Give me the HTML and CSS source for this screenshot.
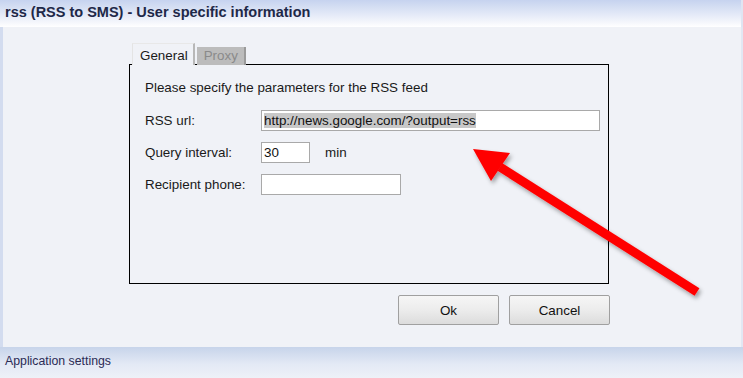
FILE: index.html
```html
<!DOCTYPE html>
<html lang="en">
<head>
    <meta charset="UTF-8">
    <title>rss (RSS to SMS) - User specific information</title>
    <link rel="stylesheet" href="styles.css">
</head>
<body>
    <div class="window">
        <div class="title-bar">rss (RSS to SMS) - User specific information</div>

        <div class="content">
            <div class="tabs">
                <span class="tab active">General</span>
                <span class="tab">Proxy</span>
            </div>

            <div class="panel">
                <p class="intro">Please specify the parameters for the RSS feed</p>

                <div class="field">
                    <label>RSS url:</label>
                    <div class="input input-wide"><span class="selected">http://news.google.com/?output=rss</span></div>
                </div>

                <div class="field">
                    <label>Query interval:</label>
                    <div class="input input-short">30</div>
                    <span class="unit">min</span>
                </div>

                <div class="field">
                    <label>Recipient phone:</label>
                    <div class="input input-mid"></div>
                </div>
            </div>

            <div class="actions">
                <button class="btn">Ok</button>
                <button class="btn">Cancel</button>
            </div>

            <!-- annotation arrow drawn over the dialog -->
            <svg class="arrow" width="743" height="378" viewBox="0 0 743 378">
                <defs>
                    <filter id="shadow" x="-20%" y="-20%" width="140%" height="140%">
                        <feDropShadow dx="2" dy="3" stdDeviation="2" flood-color="#000" flood-opacity="0.35"/>
                    </filter>
                </defs>
                <g filter="url(#shadow)" fill="#ff0000">
                    <line x1="697" y1="292" x2="500" y2="167" stroke="#ff0000" stroke-width="9"/>
                    <polygon points="473,149 510,153 491,181"/>
                </g>
            </svg>
        </div>

        <div class="status-bar">Application settings</div>
    </div>
</body>
</html>
```

FILE: styles.css
```css
* {
    margin: 0;
    padding: 0;
    box-sizing: border-box;
}

body {
    font-family: 'Liberation Sans', Arial, sans-serif;
    font-size: 13.4px;
    color: #1a1a1a;
    background: #f0f2f7;
    width: 743px;
    height: 378px;
    overflow: hidden;
}

.window {
    display: flex;
    flex-direction: column;
    height: 378px;
    position: relative;
}

.title-bar {
    height: 27px;
    padding: 4px 0 0 5px;
    font-size: 14.5px;
    font-weight: 700;
    color: #1e2848;
    background: linear-gradient(to bottom, #c6d3ef 0%, #dfe6f6 45%, #f3f5fb 80%, #ffffff 100%);
    border-right: 2px solid #dfe5f2;
}

.content {
    flex: 1;
    border-left: 3px solid #d3dcef;
    border-right: 2px solid #e2e7f3;
    padding: 17px 0 0 126px;
}

.tabs {
    display: flex;
    align-items: flex-end;
    padding-left: 3px;
    height: 21px;
    position: relative;
    z-index: 1;
    margin-bottom: -1px;
}

.tab {
    display: block;
    height: 18px;
    padding: 1px 6px 0 7px;
    background: #bcbcbc;
    color: #8a8a8a;
    border-right: 2px solid #9a9a9a;
    margin-left: 2px;
}

.tab.active {
    height: 22px;
    padding: 4px 5px 0 7px;
    margin-left: 0;
    background: #f0f2f7;
    color: #1a1a1a;
    border-left: 1px solid #e4e4e4;
    border-top: 1px solid #e8e8e8;
    border-right: 2px solid #b8b8b8;
}

.panel {
    width: 480px;
    height: 220px;
    border: 1px solid #000;
    padding: 15px 0 0 15px;
}

.intro {
    margin-bottom: 15px;
}

.field {
    display: flex;
    align-items: center;
    height: 21px;
    margin-bottom: 11px;
}

.field label {
    width: 116px;
}

.input {
    height: 21px;
    border: 1px solid #a9a9a9;
    background: #fff;
    padding: 2px 0 0 2px;
    color: #111;
}

.input-wide {
    width: 339px;
}

.input-short {
    width: 49px;
}

.input-mid {
    width: 140px;
}

.selected {
    background: #c8c8c8;
}

.unit {
    margin-left: 15px;
}

.actions {
    display: flex;
    gap: 10px;
    padding: 11px 0 0 269px;
}

.btn {
    width: 101px;
    height: 30px;
    font-family: inherit;
    font-size: 13.4px;
    color: #111;
    border: 1px solid #a0a0a0;
    border-radius: 2px;
    background: linear-gradient(to bottom, #f6f6f6 0%, #ececec 50%, #dcdcdc 100%);
}

.arrow {
    position: absolute;
    left: 0;
    top: 0;
    pointer-events: none;
}

.status-bar {
    height: 31px;
    padding: 7px 0 0 5px;
    font-size: 12.3px;
    color: #2b2b55;
    background: linear-gradient(to bottom, #c7d4ea 0%, #e3e9f5 55%, #eef1f8 100%);
}
```
